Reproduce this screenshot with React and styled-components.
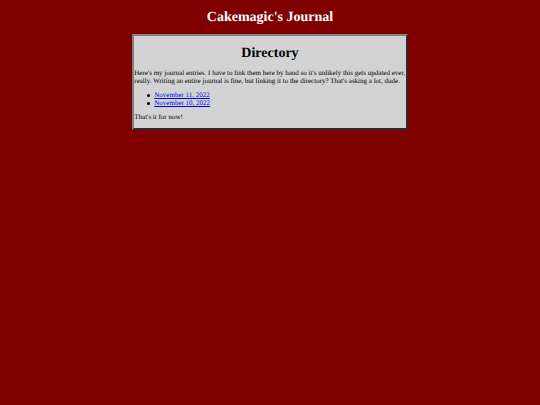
import React from 'react';
import styled, { createGlobalStyle } from 'styled-components';

const GlobalStyle = createGlobalStyle`
  body {
    margin: 0;
    background: #800000;
    color: #000;
    font-family: 'Liberation Serif', serif;
    font-size: 7px;
    line-height: 8px;
    text-rendering: geometricPrecision;
  }
`;

const Page = styled.div`
  padding: 10px 0;
`;

const SiteTitle = styled.h1`
  margin: 0 0 9px;
  color: #fff;
  font-size: 14px;
  line-height: 15px;
  text-align: center;
`;

const Panel = styled.main`
  box-sizing: border-box;
  width: 51%;
  margin: 0 auto;
  padding-bottom: 7px;
  border: 2px solid;
  border-color: #808080 #2c2c2c #2c2c2c #808080;
  background: #d3d3d3;
`;

const PanelTitle = styled.h2`
  margin: 10px 0 8px;
  font-size: 14px;
  line-height: 15px;
  text-align: center;
`;

const Text = styled.p`
  margin: 0;
`;

const EntryList = styled.ul`
  margin: 6px 0;
  padding-left: 13px;
  list-style: none;
`;

const Entry = styled.li`
  display: flex;
  align-items: center;
  gap: 4px;

  &::before {
    content: '';
    width: 3px;
    height: 3px;
    border-radius: 50%;
    background: #000;
  }
`;

const EntryLink = styled.a`
  color: #0000ee;
  text-decoration: underline;
`;

const entries = ['November 11, 2022', 'November 10, 2022'];

export default function App() {
  return (
    <Page>
      <GlobalStyle />
      <SiteTitle>Cakemagic's Journal</SiteTitle>
      <Panel>
        <PanelTitle>Directory</PanelTitle>
        <Text>
          Here's my journal entries. I have to link them here by hand so it's
          unlikely this gets updated ever, really. Writing an entire journal is
          fine, but linking it to the directory? That's asking a lot, dude.
        </Text>
        <EntryList>
          {entries.map(entry => (
            <Entry key={entry}>
              <EntryLink href="#">{entry}</EntryLink>
            </Entry>
          ))}
        </EntryList>
        <Text>That's it for now!</Text>
      </Panel>
    </Page>
  );
}
